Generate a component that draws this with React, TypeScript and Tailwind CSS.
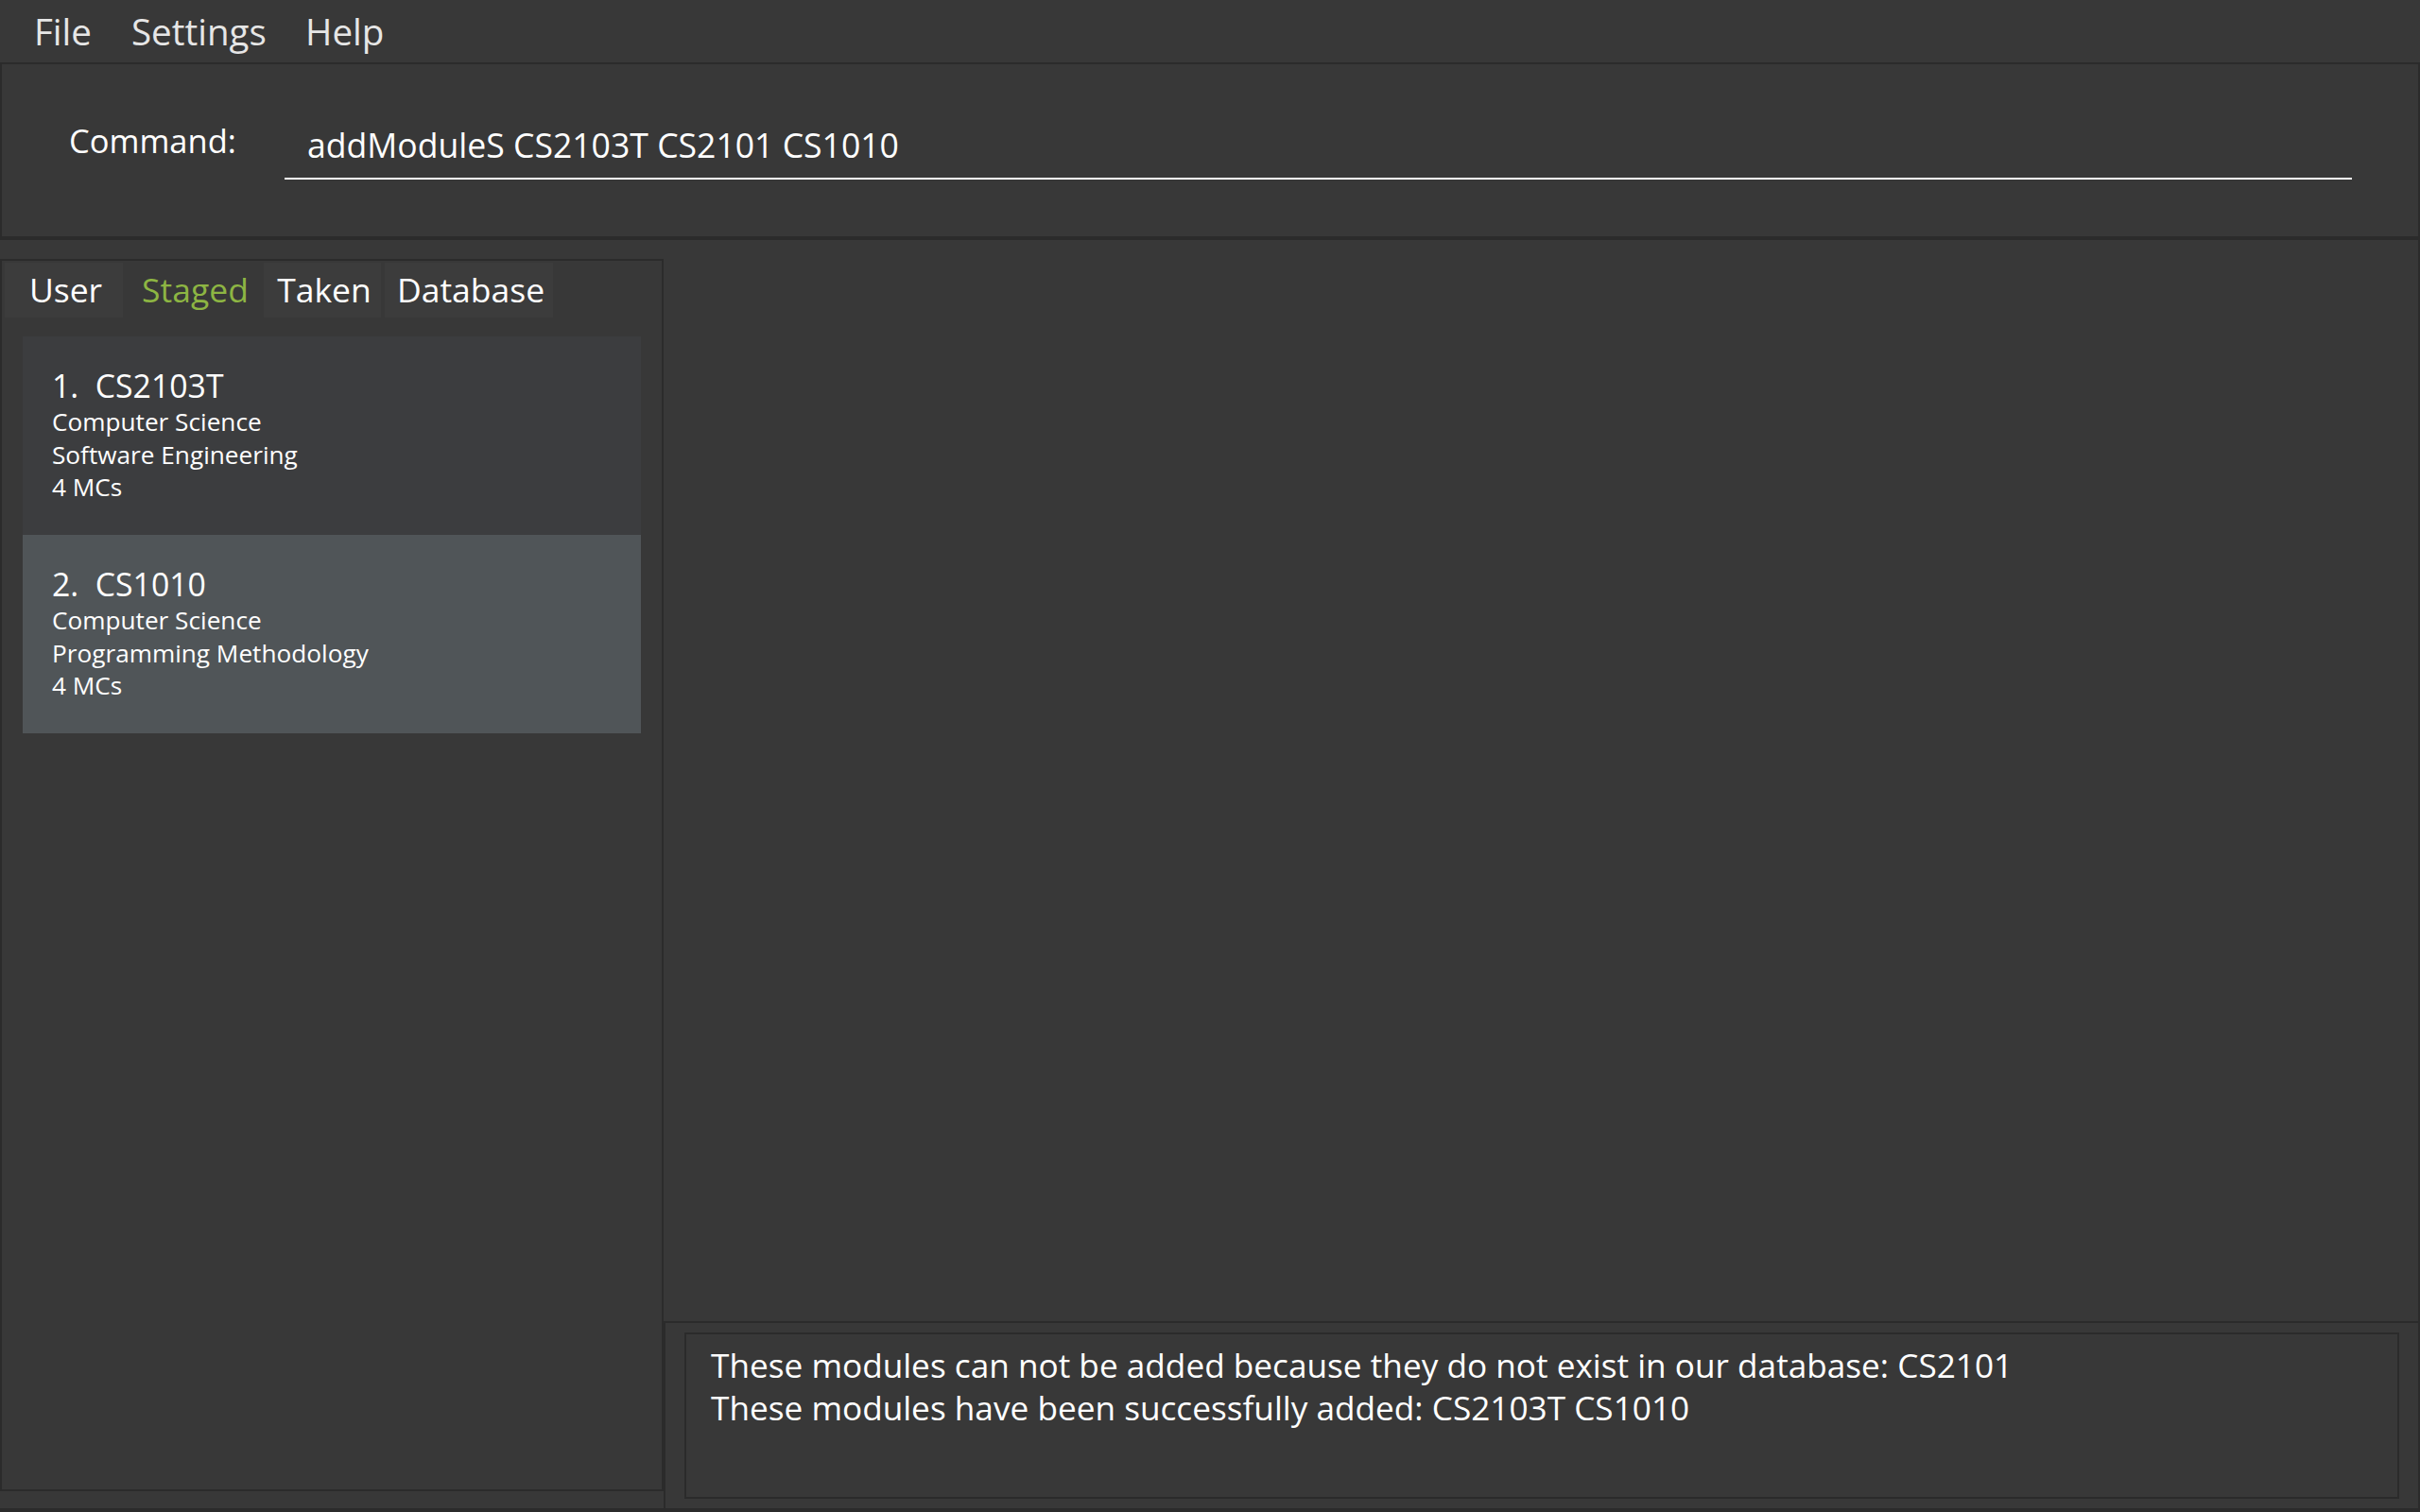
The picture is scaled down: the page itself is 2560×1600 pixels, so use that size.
export default function App() {
  const font = "font-['Open_Sans','Noto_Sans',sans-serif]";
  return (
    <div className={`w-[2560px] h-[1600px] bg-[#2b2b2b] flex flex-col overflow-hidden text-white ${font}`}>
      {/* Menu bar */}
      <div className="h-[66px] bg-[#383838] flex items-center text-[38.5px] text-[#e6e6e6] shrink-0">
        <span className="ml-[36px] w-[103px] leading-none">File</span>
        <span className="w-[184px] leading-none">Settings</span>
        <span className="leading-none">Help</span>
      </div>

      {/* Command box */}
      <div className="mt-[2px] mx-[2px] h-[182px] bg-[#383838] flex shrink-0">
        <div className="pl-[71px] pt-[63px] w-[299px] text-[34.5px] leading-[36px]">Command:</div>
        <div className="pt-[67px] w-[2187px]">
          <div className="border-b-2 border-white pl-[24px] pb-[17px] text-[35.6px] leading-[36px]">
            addModuleS CS2103T CS2101 CS1010
          </div>
        </div>
      </div>

      {/* Main */}
      <div className="mt-[4px] flex flex-1 min-h-0">
        {/* Left column */}
        <div className="w-[702px] bg-[#383838] flex flex-col">
          <div className="h-[20px] shrink-0" />
          <div className="flex-1 border-2 border-[#2b2b2b] flex flex-col">
            <div className="flex gap-[4px] pl-[3px] pt-[2px] h-[60px] text-[35.5px] leading-none">
              <div className="w-[125px] h-[58px] pl-[4px] bg-[#3c3c3c] flex items-center justify-center">User</div>
              <div className="w-[141px] h-[58px] pl-[4px] flex items-center justify-center text-[#8db543]">Staged</div>
              <div className="w-[124px] h-[58px] pl-[4px] bg-[#3c3c3c] flex items-center justify-center">Taken</div>
              <div className="w-[178px] h-[58px] pl-[4px] bg-[#3c3c3c] flex items-center justify-center">Database</div>
            </div>
            <div className="pt-[20px] pl-[22px] pr-[18px] flex flex-col">
              <ModuleCard
                index="1."
                code="CS2103T"
                lines={["Computer Science", "Software Engineering", "4 MCs"]}
                bg="bg-[#3c3d3f]"
              />
              <ModuleCard
                index="2."
                code="CS1010"
                lines={["Computer Science", "Programming Methodology", "4 MCs"]}
                bg="bg-[#505558]"
              />
            </div>
          </div>
          <div className="h-[18px] shrink-0" />
          <div className="h-[4px] shrink-0 bg-[#2b2b2b]" />
        </div>

        {/* Right column */}
        <div className="flex-1 flex flex-col mr-[2px]">
          <div className="h-[1144px] bg-[#383838] shrink-0" />
          <div className="mt-[2px] h-[196px] bg-[#383838] border-l-2 border-[#2b2b2b] pl-[20px] pr-[20px] pt-[10px] pb-[10px]">
            <div className="h-[176px] border-2 border-[#2b2b2b] pl-[26px] pt-[10px] text-[35.2px] leading-[45px]">
              <div>These modules can not be added because they do not exist in our database: CS2101</div>
              <div>These modules have been successfully added: CS2103T CS1010</div>
            </div>
          </div>
        </div>
      </div>
    </div>
  );
}

function ModuleCard({ index, code, lines, bg }: { index: string; code: string; lines: string[]; bg: string }) {
  return (
    <div className={`h-[210px] w-[654px] ${bg} pl-[31px] pt-[34px]`}>
      <div className="text-[33.8px] leading-[36px] whitespace-pre">{`${index}  ${code}`}</div>
      <div className="mt-[3px] text-[26.2px] leading-[34.5px]">
        {lines.map((l) => (
          <div key={l}>{l}</div>
        ))}
      </div>
    </div>
  );
}
